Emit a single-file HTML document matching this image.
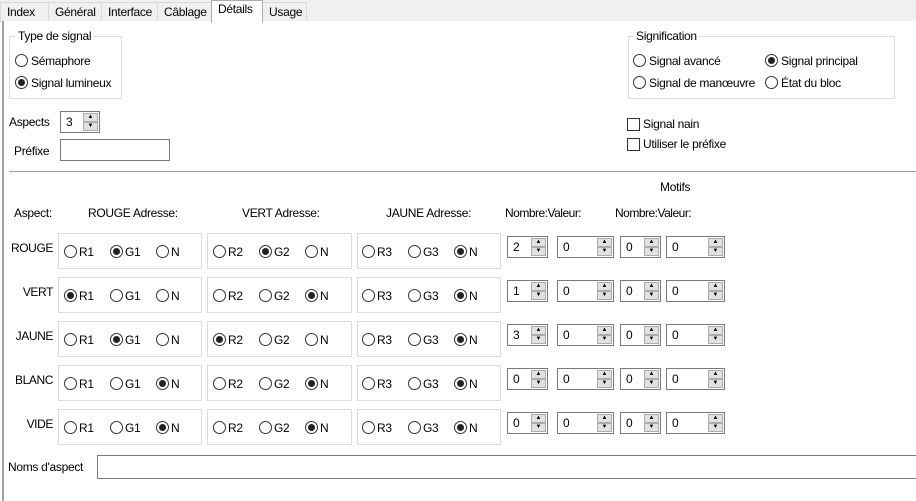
<!DOCTYPE html>
<html><head><meta charset="utf-8"><style>
*{box-sizing:border-box;margin:0;padding:0}
body{width:916px;height:496px;background:#fff;font:12px "Liberation Sans",sans-serif;letter-spacing:-0.3px;color:#000;position:relative;overflow:hidden}
.a{position:absolute;white-space:nowrap}
.tabbar{position:absolute;left:0;top:0;width:916px;height:22px;background:#f0f0f0;border-bottom:1px solid #adadad}
.tab{position:absolute;top:2px;height:20px;border:1px solid #d9d9d9;border-bottom:none;background:#f0f0f0;padding:2px 0 0 6px}
.tab.sel{top:0;height:23px;background:#fff;border-color:#adadad;z-index:2}
.panel{position:absolute;left:2px;top:21px;width:916px;height:480px;border-left:2px solid #a0a0a0;background:#fff}
.gb{position:absolute;border:1px solid #dcdcdc}
.gt{position:absolute;background:#fff;padding:0 2px}
.r{position:absolute;width:13px;height:13px;border:1px solid #333;border-radius:50%;background:#fff}
.r.on::after{content:"";position:absolute;left:2px;top:2px;width:7px;height:7px;border-radius:50%;background:#222}
.cb{position:absolute;width:13px;height:13px;border:1px solid #333;background:#fff}
.box{position:absolute;border:1px solid #dcdcdc}
.sp{position:absolute;height:22px;border:1px solid #7a7a7a;background:#fff;padding:3px 0 0 5px}
.sp .b{position:absolute;right:1px;top:1px;width:15px;height:18px;}
.sp .b i{display:block;height:9px;background:#e1e1e1;border:1px solid #adadad;font-style:normal;font-size:6px;line-height:7px;text-align:center;color:#000;letter-spacing:0}
.in{position:absolute;border:1px solid #7a7a7a;background:#fff}
.rl{position:absolute;left:0;width:53px;text-align:right;letter-spacing:-0.4px}
</style></head><body>
<div class="tabbar"></div>
<div class="tab" style="left:0;width:49px">Index</div>
<div class="tab" style="left:48px;width:54px">Général</div>
<div class="tab" style="left:101px;width:57px">Interface</div>
<div class="tab" style="left:157px;width:55px">Câblage</div>
<div class="tab" style="left:262px;width:45px">Usage</div>
<div class="panel"></div>
<div class="tab sel" style="left:211px;width:52px;padding-top:1px">Détails</div>

<div class="gb" style="left:9px;top:36px;width:113px;height:63px"></div>
<div class="gt a" style="left:16px;top:29px">Type de signal</div>
<div class="r" style="left:15px;top:54px"></div><div class="a" style="left:31px;top:54px">Sémaphore</div>
<div class="r on" style="left:15px;top:76px"></div><div class="a" style="left:31px;top:76px">Signal lumineux</div>

<div class="a" style="left:9px;top:115px">Aspects</div>
<div class="sp" style="left:60px;top:111px;width:40px">3<div class="b"><i>▲</i><i>▼</i></div></div>
<div class="a" style="left:14px;top:144px">Préfixe</div>
<div class="in" style="left:60px;top:139px;width:110px;height:22px"></div>

<div class="gb" style="left:628px;top:36px;width:267px;height:63px"></div>
<div class="gt a" style="left:634px;top:29px">Signification</div>
<div class="r" style="left:633px;top:54px"></div><div class="a" style="left:649px;top:54px">Signal avancé</div>
<div class="r on" style="left:765px;top:54px"></div><div class="a" style="left:781px;top:54px">Signal principal</div>
<div class="r" style="left:633px;top:76px"></div><div class="a" style="left:649px;top:76px">Signal de manœuvre</div>
<div class="r" style="left:765px;top:76px"></div><div class="a" style="left:781px;top:76px">État du bloc</div>

<div class="cb" style="left:627px;top:118px"></div><div class="a" style="left:643px;top:117px">Signal nain</div>
<div class="cb" style="left:627px;top:138px"></div><div class="a" style="left:643px;top:137px">Utiliser le préfixe</div>

<div class="a" style="left:9px;top:171px;width:907px;height:1px;background:#a0a0a0"></div>
<div class="a" style="left:660px;top:180px">Motifs</div>
<div class="a" style="left:14px;top:206px">Aspect:</div>
<div class="a" style="left:88px;top:206px">ROUGE Adresse:</div>
<div class="a" style="left:242px;top:206px">VERT Adresse:</div>
<div class="a" style="left:386px;top:206px">JAUNE Adresse:</div>
<div class="a" style="left:505px;top:206px;letter-spacing:-0.5px">Nombre:Valeur:</div>
<div class="a" style="left:615px;top:206px;letter-spacing:-0.5px">Nombre:Valeur:</div>

<div class="rl" style="top:241px">ROUGE</div>
<div class="rl" style="top:285px">VERT</div>
<div class="rl" style="top:329px">JAUNE</div>
<div class="rl" style="top:373px">BLANC</div>
<div class="rl" style="top:417px">VIDE</div>

<div class="box" style="left:58px;top:233px;width:144px;height:36px"></div><div class="box" style="left:207px;top:233px;width:145px;height:36px"></div><div class="box" style="left:357px;top:233px;width:144px;height:36px"></div>
<div class="box" style="left:58px;top:277px;width:144px;height:36px"></div><div class="box" style="left:207px;top:277px;width:145px;height:36px"></div><div class="box" style="left:357px;top:277px;width:144px;height:36px"></div>
<div class="box" style="left:58px;top:321px;width:144px;height:36px"></div><div class="box" style="left:207px;top:321px;width:145px;height:36px"></div><div class="box" style="left:357px;top:321px;width:144px;height:36px"></div>
<div class="box" style="left:58px;top:365px;width:144px;height:36px"></div><div class="box" style="left:207px;top:365px;width:145px;height:36px"></div><div class="box" style="left:357px;top:365px;width:144px;height:36px"></div>
<div class="box" style="left:58px;top:409px;width:144px;height:36px"></div><div class="box" style="left:207px;top:409px;width:145px;height:36px"></div><div class="box" style="left:357px;top:409px;width:144px;height:36px"></div>

<div class="r" style="left:64px;top:245px"></div><div class="a" style="left:79px;top:245px">R1</div>
<div class="r on" style="left:110px;top:245px"></div><div class="a" style="left:125px;top:245px">G1</div>
<div class="r" style="left:156px;top:245px"></div><div class="a" style="left:171px;top:245px">N</div>
<div class="r" style="left:213px;top:245px"></div><div class="a" style="left:228px;top:245px">R2</div>
<div class="r on" style="left:259px;top:245px"></div><div class="a" style="left:274px;top:245px">G2</div>
<div class="r" style="left:305px;top:245px"></div><div class="a" style="left:320px;top:245px">N</div>
<div class="r" style="left:362px;top:245px"></div><div class="a" style="left:377px;top:245px">R3</div>
<div class="r" style="left:408px;top:245px"></div><div class="a" style="left:423px;top:245px">G3</div>
<div class="r on" style="left:454px;top:245px"></div><div class="a" style="left:469px;top:245px">N</div>

<div class="r on" style="left:64px;top:289px"></div><div class="a" style="left:79px;top:289px">R1</div>
<div class="r" style="left:110px;top:289px"></div><div class="a" style="left:125px;top:289px">G1</div>
<div class="r" style="left:156px;top:289px"></div><div class="a" style="left:171px;top:289px">N</div>
<div class="r" style="left:213px;top:289px"></div><div class="a" style="left:228px;top:289px">R2</div>
<div class="r" style="left:259px;top:289px"></div><div class="a" style="left:274px;top:289px">G2</div>
<div class="r on" style="left:305px;top:289px"></div><div class="a" style="left:320px;top:289px">N</div>
<div class="r" style="left:362px;top:289px"></div><div class="a" style="left:377px;top:289px">R3</div>
<div class="r" style="left:408px;top:289px"></div><div class="a" style="left:423px;top:289px">G3</div>
<div class="r on" style="left:454px;top:289px"></div><div class="a" style="left:469px;top:289px">N</div>

<div class="r" style="left:64px;top:333px"></div><div class="a" style="left:79px;top:333px">R1</div>
<div class="r on" style="left:110px;top:333px"></div><div class="a" style="left:125px;top:333px">G1</div>
<div class="r" style="left:156px;top:333px"></div><div class="a" style="left:171px;top:333px">N</div>
<div class="r on" style="left:213px;top:333px"></div><div class="a" style="left:228px;top:333px">R2</div>
<div class="r" style="left:259px;top:333px"></div><div class="a" style="left:274px;top:333px">G2</div>
<div class="r" style="left:305px;top:333px"></div><div class="a" style="left:320px;top:333px">N</div>
<div class="r" style="left:362px;top:333px"></div><div class="a" style="left:377px;top:333px">R3</div>
<div class="r" style="left:408px;top:333px"></div><div class="a" style="left:423px;top:333px">G3</div>
<div class="r on" style="left:454px;top:333px"></div><div class="a" style="left:469px;top:333px">N</div>

<div class="r" style="left:64px;top:377px"></div><div class="a" style="left:79px;top:377px">R1</div>
<div class="r" style="left:110px;top:377px"></div><div class="a" style="left:125px;top:377px">G1</div>
<div class="r on" style="left:156px;top:377px"></div><div class="a" style="left:171px;top:377px">N</div>
<div class="r" style="left:213px;top:377px"></div><div class="a" style="left:228px;top:377px">R2</div>
<div class="r" style="left:259px;top:377px"></div><div class="a" style="left:274px;top:377px">G2</div>
<div class="r on" style="left:305px;top:377px"></div><div class="a" style="left:320px;top:377px">N</div>
<div class="r" style="left:362px;top:377px"></div><div class="a" style="left:377px;top:377px">R3</div>
<div class="r" style="left:408px;top:377px"></div><div class="a" style="left:423px;top:377px">G3</div>
<div class="r on" style="left:454px;top:377px"></div><div class="a" style="left:469px;top:377px">N</div>

<div class="r" style="left:64px;top:421px"></div><div class="a" style="left:79px;top:421px">R1</div>
<div class="r" style="left:110px;top:421px"></div><div class="a" style="left:125px;top:421px">G1</div>
<div class="r on" style="left:156px;top:421px"></div><div class="a" style="left:171px;top:421px">N</div>
<div class="r" style="left:213px;top:421px"></div><div class="a" style="left:228px;top:421px">R2</div>
<div class="r" style="left:259px;top:421px"></div><div class="a" style="left:274px;top:421px">G2</div>
<div class="r on" style="left:305px;top:421px"></div><div class="a" style="left:320px;top:421px">N</div>
<div class="r" style="left:362px;top:421px"></div><div class="a" style="left:377px;top:421px">R3</div>
<div class="r" style="left:408px;top:421px"></div><div class="a" style="left:423px;top:421px">G3</div>
<div class="r on" style="left:454px;top:421px"></div><div class="a" style="left:469px;top:421px">N</div>

<div class="sp" style="left:507px;top:236px;width:41px">2<div class="b"><i>▲</i><i>▼</i></div></div>
<div class="sp" style="left:557px;top:236px;width:57px">0<div class="b"><i>▲</i><i>▼</i></div></div>
<div class="sp" style="left:620px;top:236px;width:41px">0<div class="b"><i>▲</i><i>▼</i></div></div>
<div class="sp" style="left:666px;top:236px;width:59px">0<div class="b"><i>▲</i><i>▼</i></div></div>
<div class="sp" style="left:507px;top:280px;width:41px">1<div class="b"><i>▲</i><i>▼</i></div></div>
<div class="sp" style="left:557px;top:280px;width:57px">0<div class="b"><i>▲</i><i>▼</i></div></div>
<div class="sp" style="left:620px;top:280px;width:41px">0<div class="b"><i>▲</i><i>▼</i></div></div>
<div class="sp" style="left:666px;top:280px;width:59px">0<div class="b"><i>▲</i><i>▼</i></div></div>
<div class="sp" style="left:507px;top:324px;width:41px">3<div class="b"><i>▲</i><i>▼</i></div></div>
<div class="sp" style="left:557px;top:324px;width:57px">0<div class="b"><i>▲</i><i>▼</i></div></div>
<div class="sp" style="left:620px;top:324px;width:41px">0<div class="b"><i>▲</i><i>▼</i></div></div>
<div class="sp" style="left:666px;top:324px;width:59px">0<div class="b"><i>▲</i><i>▼</i></div></div>
<div class="sp" style="left:507px;top:368px;width:41px">0<div class="b"><i>▲</i><i>▼</i></div></div>
<div class="sp" style="left:557px;top:368px;width:57px">0<div class="b"><i>▲</i><i>▼</i></div></div>
<div class="sp" style="left:620px;top:368px;width:41px">0<div class="b"><i>▲</i><i>▼</i></div></div>
<div class="sp" style="left:666px;top:368px;width:59px">0<div class="b"><i>▲</i><i>▼</i></div></div>
<div class="sp" style="left:507px;top:412px;width:41px">0<div class="b"><i>▲</i><i>▼</i></div></div>
<div class="sp" style="left:557px;top:412px;width:57px">0<div class="b"><i>▲</i><i>▼</i></div></div>
<div class="sp" style="left:620px;top:412px;width:41px">0<div class="b"><i>▲</i><i>▼</i></div></div>
<div class="sp" style="left:666px;top:412px;width:59px">0<div class="b"><i>▲</i><i>▼</i></div></div>

<div class="a" style="left:8px;top:460px">Noms d'aspect</div>
<div class="in" style="left:97px;top:455px;width:825px;height:24px"></div>
</body></html>
